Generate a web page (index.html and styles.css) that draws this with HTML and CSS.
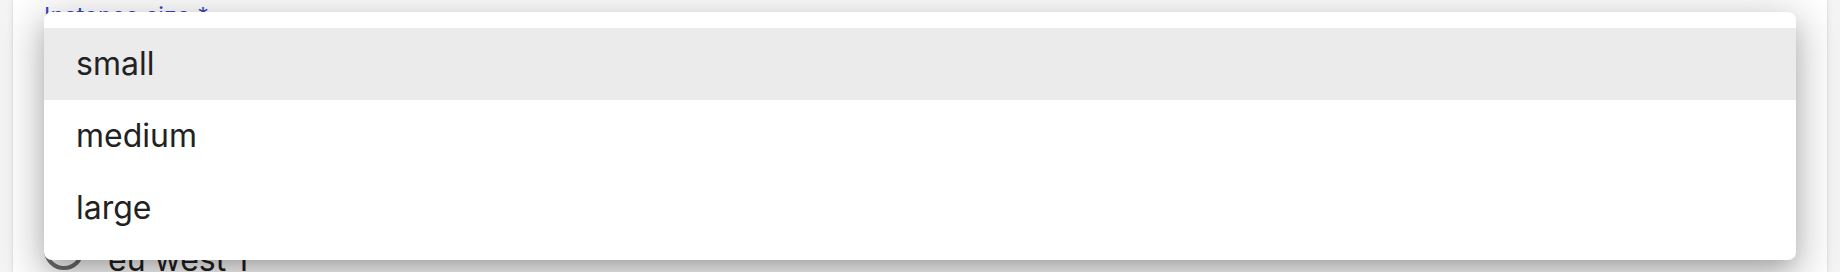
FILE: index.html
```html
<!DOCTYPE html>
<html lang="en">
<head>
  <meta charset="UTF-8">
  <title>Instance size</title>
  <meta name="viewport" content="width=device-width, initial-scale=1.0">
  <link rel="stylesheet" href="styles.css">
</head>
<body>
  <div class="page">
    <div class="form-card">
      <label class="field-label">Instance size *</label>
      <div class="select-spacer"></div>
      <div class="radio-row">
        <span class="radio-icon"></span>
        <span class="radio-text">eu west 1</span>
      </div>
    </div>
  </div>

  <!-- open select menu, floats over the form -->
  <ul class="menu">
    <li class="menu-item selected">small</li>
    <li class="menu-item">medium</li>
    <li class="menu-item">large</li>
  </ul>
</body>
</html>
```

FILE: styles.css
```css
html, body {
  margin: 0;
  padding: 0;
  height: 100%;
  background: #f4f4f4;
  font-family: Inter, 'Noto Sans', sans-serif;
  overflow: hidden;
}
.page {
  padding: 0 12px;
  height: 100%;
}
.form-card {
  background: #fff;
  height: 100%;
  border-left: 1px solid #e4e4e4;
  border-right: 1px solid #e4e4e4;
  box-shadow: 0 0 6px #0000000d;
  padding: 4px 32px 0 31px;
  box-sizing: border-box;
}
.field-label {
  display: block;
  font-size: 23px;
  line-height: 24px;
  color: #3a45c2;
  letter-spacing: 0.3px;
}
.select-spacer {
  height: 202px;
}
.radio-row {
  display: flex;
  align-items: flex-start;
  gap: 24px;
}
.radio-icon {
  width: 32px;
  height: 32px;
  border: 4px solid #6f6f6f;
  border-radius: 50%;
  flex: none;
}
.radio-text {
  font-size: 32px;
  line-height: 48px;
  margin-top: 6px;
  color: #222;
}
.menu {
  position: absolute;
  top: 12px;
  left: 44px;
  width: 1752px;
  margin: 0;
  padding: 16px 0;
  list-style: none;
  background: #fff;
  border-radius: 8px;
  box-shadow: 0 10px 20px -6px #00000033, 0 16px 40px 4px #00000024, 0 6px 44px 8px #0000001f;
}
.menu-item {
  font-size: 32px;
  line-height: 48px;
  padding: 12px 32px;
  color: #222;
}
.menu-item.selected {
  background: #ebebeb;
}
```
